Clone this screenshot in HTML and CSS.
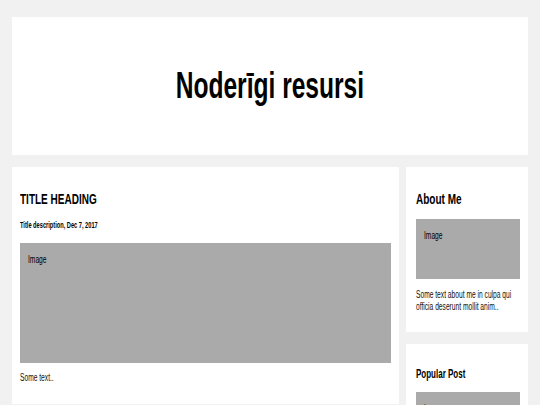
FILE: index.html
```
<!DOCTYPE html>
<html lang="lv">
<head>
<meta charset="utf-8">
<title>Noderīgi resursi</title>
<link rel="stylesheet" href="styles.css">
</head>
<body>
<div class="header">
  <h1 class="site-title">Noderīgi resursi</h1>
</div>
<div class="row">
  <div class="leftcolumn">
    <div class="card card-main">
      <h2 class="card-title narrow">TITLE HEADING</h2>
      <h5 class="card-meta narrow">Title description, Dec 7, 2017</h5>
      <div class="fakeimg fakeimg-main"><span class="fakeimg-label narrow">Image</span></div>
      <p class="card-text narrow">Some text..</p>
    </div>
  </div>
  <div class="rightcolumn">
    <div class="card card-side">
      <h2 class="card-title narrow">About Me</h2>
      <div class="fakeimg fakeimg-side"><span class="fakeimg-label narrow">Image</span></div>
      <p class="card-text narrow">Some text about me in culpa qui officia deserunt mollit anim..</p>
    </div>
    <div class="card card-side card-popular">
      <h3 class="side-title narrow">Popular Post</h3>
      <div class="fakeimg fakeimg-side"><span class="fakeimg-label narrow">Image</span></div>
    </div>
  </div>
</div>
</body>
</html>
```
FILE: styles.css
```
* { box-sizing: border-box; }
html, body { margin: 0; }
body {
  padding: 17px 12px 0;
  background: #f1f1f1;
  font-family: "Liberation Sans", Arial, sans-serif;
  color: #000;
  overflow: hidden;
}
/* condensed look: text drawn at 2/3 of its natural width */
.narrow {
  display: block;
  width: 150%;
  transform: scaleX(0.6667);
  transform-origin: left center;
}
.header {
  background: #fff;
  height: 138px;
  display: flex;
  align-items: center;
  justify-content: center;
}
.site-title {
  margin: 0;
  font-size: 37px;
  line-height: 42px;
  font-weight: bold;
  transform: scaleX(0.664);
  transform-origin: center center;
}
.row { display: flex; }
.leftcolumn { width: 75%; }
.rightcolumn { width: 25%; padding-left: 7px; }
.card {
  background: #fff;
  margin-top: 12px;
}
.card-main { padding: 8px 8px 20px 8px; }
.card-side { padding: 8px 8px 19px 10px; }
.card-title {
  margin: 15px 0 0;
  font-size: 15px;
  line-height: 18px;
  font-weight: bold;
}
.card-meta {
  margin: 12px 0 0;
  font-size: 8.5px;
  line-height: 10px;
  font-weight: bold;
}
.fakeimg {
  background: #aaa;
  padding: 11px 8px;
  font-size: 10px;
  line-height: 12px;
  overflow: hidden;
}
.fakeimg-main { height: 120px; margin-top: 13px; }
.fakeimg-side { height: 60px; margin-top: 11px; }
.card-text {
  margin: 9px 0 0;
  font-size: 10px;
  line-height: 12px;
  color: #111;
}
.card-side .card-text { margin-top: 10px; }
.side-title {
  margin: 15px 0 0;
  font-size: 12px;
  line-height: 14px;
  font-weight: bold;
}
```
